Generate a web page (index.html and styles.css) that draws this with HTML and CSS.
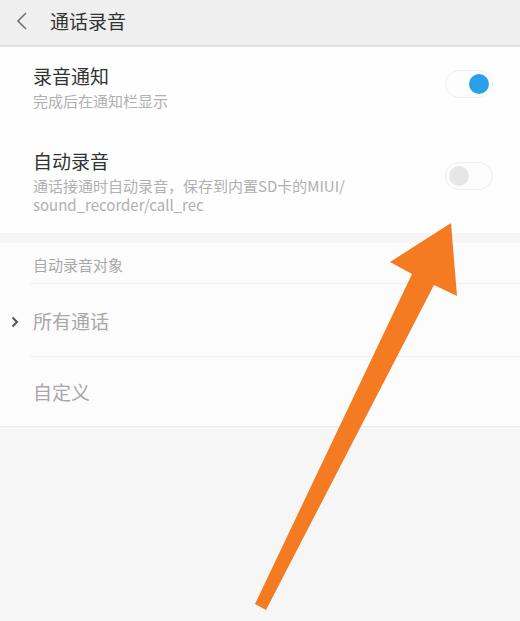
FILE: index.html
```html
<!DOCTYPE html>
<html lang="zh">
<head>
    <meta charset="UTF-8">
    <meta name="viewport" content="width=device-width, initial-scale=1.0">
    <title>通话录音</title>
    <link rel="stylesheet" href="styles.css">
</head>
<body>
    <div class="page">
        <div class="header">
            <svg class="back" width="14" height="20" viewBox="0 0 14 20">
                <path d="M11 2 L3 10 L11 18" fill="none" stroke="#707070" stroke-width="1.6"/>
            </svg>
            <span class="header-title">通话录音</span>
        </div>

        <div class="group">
            <div class="row row-first">
                <div class="text">
                    <p class="title">录音通知</p>
                    <p class="sub">完成后在通知栏显示</p>
                </div>
                <div class="switch on"><span class="knob"></span></div>
            </div>
            <div class="row row-second">
                <div class="text">
                    <p class="title">自动录音</p>
                    <p class="sub">通话接通时自动录音，保存到内置SD卡的MIUI/<br>sound_recorder/call_rec</p>
                </div>
                <div class="switch"><span class="knob"></span></div>
            </div>
        </div>

        <div class="gap"></div>

        <div class="group2">
            <p class="group-head">自动录音对象</p>
            <div class="item item-line">
                <svg class="mark" width="8" height="12" viewBox="0 0 8 12">
                    <path d="M1.5 1.5 L6 6 L1.5 10.5" fill="none" stroke="#555" stroke-width="2"/>
                </svg>
                <span class="item-name">所有通话</span>
            </div>
            <div class="item item-last">
                <span class="item-name">自定义</span>
            </div>
        </div>

        <svg class="arrow" width="520" height="621" viewBox="0 0 520 621">
            <path d="M451 223 L457 296 L434 285 L266 610 L255 604 L412 274 L390 262 Z" fill="#f57b22"/>
        </svg>
    </div>
</body>
</html>
```

FILE: styles.css
```css
body{
    margin: 0;
    font-family: "Noto Sans CJK SC", "Noto Sans", sans-serif;
    background: #f6f6f6;
}

p{
    margin: 0;
}

.page{
    position: relative;
    width: 520px;
    height: 621px;
    overflow: hidden;
    background: #f6f6f6;
}

/* 상단 바 */
.header{
    background: #efefef;
    border-bottom: 2px solid #e0e0e0;
    display: flex;
    align-items: center;
    box-sizing: border-box;
    height: 47px;
    padding-bottom: 4px;
}

.back{
    margin-left: 15px;
}

.header-title{
    margin-left: 21px;
    font-size: 19px;
    color: #333;
}

.group{
    background: #fefefe;
}

.row{
    display: flex;
    align-items: center;
    padding-left: 33px;
    padding-right: 27px;
}

.row-first{
    height: 80px;
}

.row-second{
    height: 106px;
}

.text{
    flex: 1;
}

.title{
    font-size: 19px;
    line-height: 24px;
    color: #333;
}

.sub{
    font-size: 15px;
    line-height: 19px;
    color: #b0b0b0;
    margin-top: 3px;
}

.row-second .text{
    padding-top: 2px;
}

.switch{
    width: 48px;
    height: 28px;
    border: 1px solid #eeeeee;
    border-radius: 15px;
    background: #fdfdfd;
    display: flex;
    align-items: center;
    padding: 0 3px;
    box-sizing: border-box;
}

.switch .knob{
    width: 20px;
    height: 20px;
    border-radius: 50%;
    background: #e6e6e6;
}

.switch.on{
    justify-content: flex-end;
}

.switch.on .knob{
    background: #2aa0ea;
}

.row-first .switch{
    margin-top: -6px;
}

.row-second .switch{
    margin-top: -8px;
}

.gap{
    height: 10px;
    background: #f6f6f6;
}

.group2{
    background: #fcfcfc;
    border-bottom: 1px solid #ececec;
}

.group-head{
    font-size: 15px;
    line-height: 20px;
    color: #a8a8a8;
    padding: 12px 0 8px 3px;
    border-bottom: 1px solid #efefef;
    margin-left: 30px;
}

.item{
    position: relative;
    display: flex;
    align-items: center;
    padding-left: 33px;
}

.item-line{
    height: 72px;
    border-bottom: 1px solid #efefef;
    margin-left: 30px;
    padding-left: 3px;
}

.item-last{
    height: 69px;
}

.item-name{
    font-size: 19px;
    color: #a8a8a8;
}

.mark{
    position: absolute;
    left: -19px;
    top: 32px;
}

.arrow{
    position: absolute;
    left: 0;
    top: 0;
}
```
